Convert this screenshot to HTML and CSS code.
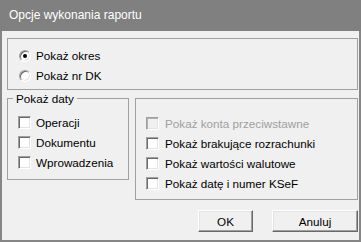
FILE: index.html
```html
<!DOCTYPE html>
<html lang="pl">
<head>
<meta charset="utf-8">
<title>Opcje wykonania raportu</title>
<link rel="stylesheet" href="styles.css">
</head>
<body>
<div class="window">
  <div class="titlebar">Opcje wykonania raportu</div>
  <div class="client">
    <div class="group top-group">
      <div class="opt"><span class="radio checked"></span><span>Pokaż okres</span></div>
      <div class="opt"><span class="radio"></span><span>Pokaż nr DK</span></div>
    </div>
    <div class="row">
      <fieldset class="group dates">
        <legend>Pokaż daty</legend>
        <div class="list dates-list">
          <div class="opt"><span class="check"></span><span>Operacji</span></div>
          <div class="opt"><span class="check"></span><span>Dokumentu</span></div>
          <div class="opt"><span class="check"></span><span>Wprowadzenia</span></div>
        </div>
      </fieldset>
      <div class="group extras">
        <div class="opt disabled"><span class="check"></span><span>Pokaż konta przeciwstawne</span></div>
        <div class="opt"><span class="check"></span><span>Pokaż brakujące rozrachunki</span></div>
        <div class="opt"><span class="check"></span><span>Pokaż wartości walutowe</span></div>
        <div class="opt"><span class="check"></span><span>Pokaż datę i numer KSeF</span></div>
      </div>
    </div>
    <div class="buttons">
      <button class="btn btn-ok">OK</button>
      <button class="btn btn-cancel">Anuluj</button>
    </div>
  </div>
</div>
</body>
</html>
```

FILE: styles.css
```css
html, body {
  margin: 0;
  padding: 0;
}

body {
  font-family: "Liberation Sans", Arial, sans-serif;
  font-size: 11.7px;
  color: #000;
  background: #f0f0f0;
}

.window {
  width: 361px;
  height: 242px;
  display: flex;
  flex-direction: column;
}

.titlebar {
  height: 31px;
  flex: none;
  background: #808080;
  color: #fff;
  font-size: 12px;
  line-height: 31px;
  padding-left: 9px;
  white-space: nowrap;
}

.client {
  flex: 1;
  background: #f0f0f0;
  border: 2px solid #868686;
  border-top: 0;
  display: flex;
  flex-direction: column;
}

.group {
  border: 1px solid #a0a0a0;
  box-sizing: border-box;
}

.top-group {
  margin: 7px 1px 0 5px;
  padding: 10px 10px 7px 10px;
  display: flex;
  flex-direction: column;
  gap: 7px;
}

.row {
  display: flex;
  align-items: flex-start;
  gap: 6px;
  margin: 0 1px 0 5px;
}

.dates {
  margin: 2px 0 0 0;
  padding: 0;
  width: 122px;
  min-width: 0;
}

.dates legend {
  margin-left: 5px;
  padding: 0 3px;
  line-height: 13px;
  height: 13px;
}

.list {
  display: flex;
  flex-direction: column;
  gap: 7px;
}

.dates-list {
  padding: 11px 10px 10px 10px;
}

.extras {
  margin-top: 8px;
  width: 223px;
  padding: 18px 10px 9px 10px;
  display: flex;
  flex-direction: column;
  gap: 7px;
}

.opt {
  display: flex;
  align-items: center;
  gap: 5px;
  height: 13px;
  line-height: 13px;
  white-space: nowrap;
}

.extras .opt {
  gap: 6px;
}

.opt.disabled {
  color: #a0a0a0;
}

.check {
  flex: none;
  width: 13px;
  height: 13px;
  box-sizing: border-box;
  background: #fff;
  border: 1px solid;
  border-color: #a0a0a0 #ffffff #ffffff #a0a0a0;
  box-shadow: inset 1px 1px 0 #696969, inset -1px -1px 0 #e3e3e3;
}

.opt.disabled .check {
  background: #f0f0f0;
  box-shadow: inset 1px 1px 0 #b0b0b0, inset -1px -1px 0 #e3e3e3;
}

.radio {
  flex: none;
  position: relative;
  width: 12px;
  height: 12px;
  margin-left: 1px;
  box-sizing: border-box;
  border-radius: 50%;
  background: #fff;
  border: 1px solid;
  border-color: #a0a0a0 #ffffff #ffffff #a0a0a0;
  box-shadow: inset 1px 1px 0 #696969, inset -1px -1px 0 #e3e3e3;
}

.radio.checked::after {
  content: "";
  position: absolute;
  left: 3px;
  top: 3px;
  width: 4px;
  height: 4px;
  border-radius: 50%;
  background: #000;
}

.buttons {
  display: flex;
  justify-content: flex-end;
  gap: 19px;
  margin: 10px 1px 0 0;
}

.btn {
  font-family: "Liberation Sans", Arial, sans-serif;
  font-size: 11.7px;
  color: #000;
  height: 22px;
  box-sizing: border-box;
  padding: 0;
  background: #f0f0f0;
  border: 1px solid;
  border-color: #ffffff #696969 #696969 #ffffff;
  box-shadow: inset -1px -1px 0 #a0a0a0, inset 1px 1px 0 #e3e3e3;
}

.btn-ok {
  width: 55px;
}

.btn-cancel {
  width: 86px;
}
```
